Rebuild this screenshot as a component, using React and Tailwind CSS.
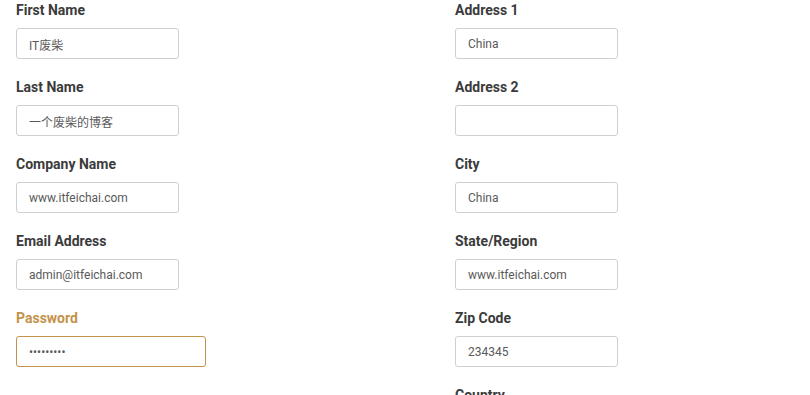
import React from "react";

const left = [
  { label: "First Name", value: "IT废柴" },
  { label: "Last Name", value: "一个废柴的博客" },
  { label: "Company Name", value: "www.itfeichai.com" },
  { label: "Email Address", value: "admin@itfeichai.com" },
  { label: "Password", value: "123456789", type: "password", focused: true },
];

const right = [
  { label: "Address 1", value: "China" },
  { label: "Address 2", value: "" },
  { label: "City", value: "China" },
  { label: "State/Region", value: "www.itfeichai.com" },
  { label: "Zip Code", value: "234345" },
  { label: "Country", value: "" },
];

function Field({ label, value, type = "text", focused }) {
  return (
    <div className="mb-[18px]">
      <label
        className={
          "block text-[14px] font-bold leading-[20px] mb-2 " +
          (focused ? "text-[#c4924a]" : "text-[#3b3b3b]")
        }
      >
        {label}
      </label>
      <input
        type={type}
        defaultValue={value}
        readOnly
        className={
          "block h-[31px] rounded-[3px] border bg-white px-[12px] pt-px text-[12px] text-[#5a5a5a] outline-none " +
          (focused ? "w-[190px] border-[#c4924a]" : "w-[163px] border-[#cfcfcf]")
        }
      />
    </div>
  );
}

export default function App() {
  return (
    <div
      className="h-[395px] w-[810px] overflow-hidden bg-white pl-4"
      style={{ fontFamily: "Roboto, 'Noto Sans CJK SC', sans-serif" }}
    >
      <div className="grid grid-cols-[439px_1fr]">
        <div>
          {left.map((f) => (
            <Field key={f.label} {...f} />
          ))}
        </div>
        <div>
          {right.map((f) => (
            <Field key={f.label} {...f} />
          ))}
        </div>
      </div>
    </div>
  );
}
